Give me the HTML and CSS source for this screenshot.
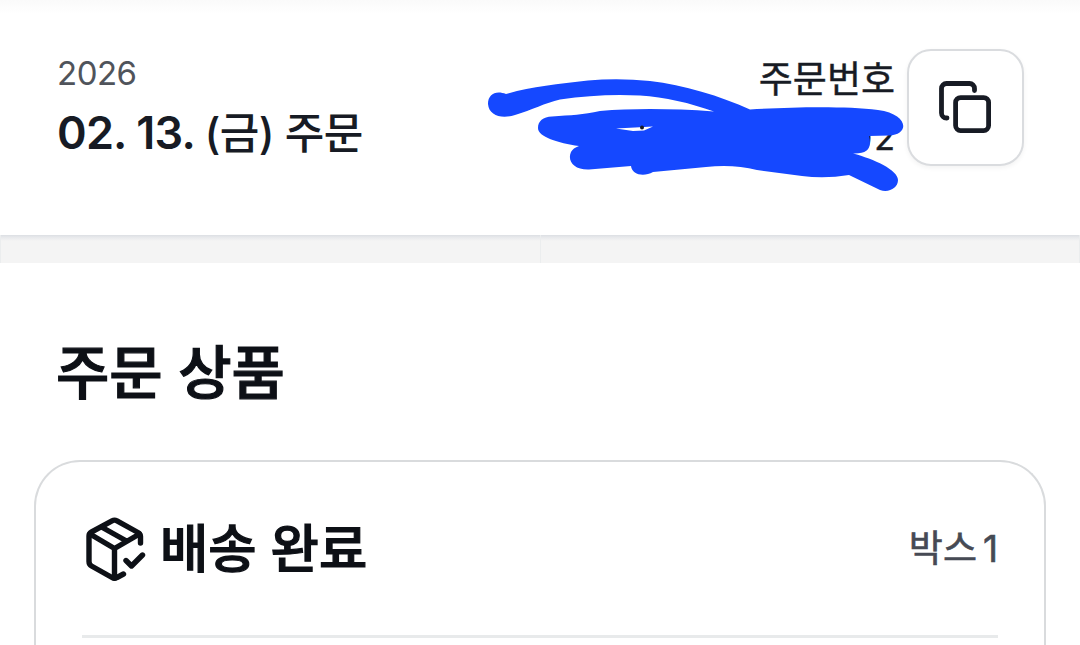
FILE: index.html
```html
<!DOCTYPE html>
<html lang="ko">
<head>
    <meta charset="UTF-8">
    <meta name="viewport" content="width=device-width, initial-scale=1.0">
    <title>주문 상세</title>
    <link rel="stylesheet" href="styles.css">
</head>
<body>
    <header class="order-header">
        <div class="order-date">
            <p class="year">2026</p>
            <h1 class="date">02. 13. <span>(금) 주문</span></h1>
        </div>
        <div class="order-number">
            <div class="number-text">
                <p class="label">주문번호</p>
                <p class="number">02</p>
            </div>
            <button class="copy" aria-label="복사">
                <svg viewBox="0 0 54 54" fill="none" stroke="#171b24" stroke-width="4.8" stroke-linecap="round">
                    <rect x="16.6" y="16.6" width="33" height="33" rx="5"/>
                    <path d="M35.500 9.500V7.500a5 5 0 0 0-5-5H7.500a5 5 0 0 0-5 5V32a5 5 0 0 0 5 5H8"/>
                </svg>
            </button>
        </div>
        <!-- marker over the order number -->
        <svg class="marker" viewBox="480 70 440 130">
            <path d="M488 103C488 93 496 89 506 93C530 86 558 83 588 79.500Q619 77 650 80C684 84 720 95 750 108.500C794 106 845 105 878 109C909 113 910 134 889 134.500L869 135C872 147 868 153 853 152.500C874 158 898 169 898 179C898 187 889 192 880 189L849 174Q825 178 802 175L757 169Q733 163 706 166L653 171C644 176 632 174 631 165L589 168.500C574 169 567 160 571 151Q573 147 579 145C558 142 538 136 538 127C538 120 543 116 552 115.500C571 114 583 114 600 110Q650 106 714 110.500C690 102 665 96 640 94.500Q600 92.500 560 98.500C545 102 532 109 515 114C502 118 489 115 488 103Z"/>
            <path class="gap" d="M616 127.500L635 126.500L653 125.500L644 129.500L633 130Z"/>
            <circle class="dot" cx="642" cy="126.500" r="2"/>
        </svg>
    </header>
    <div class="divider">
        <div></div>
        <div></div>
    </div>
    <main class="products">
        <h2>주문 상품</h2>
        <section class="box-card">
            <div class="box-head">
                <svg class="box-icon" viewBox="0 0 60 64" fill="none" stroke="#0d1016" stroke-width="5.4" stroke-linecap="round" stroke-linejoin="round">
                    <path d="M37.500 57L31 60.500Q28.500 62 26 60.500L5.500 49Q3 47.500 3 44.500V19Q3 16.300 5.500 15L26 3.800Q28.500 2.500 31 3.800L52 15.500Q54.500 17 54.500 19.500V26"/>
                    <path d="M4 17L28.500 31.500L53.500 17M28.500 31.500V61M15.500 10L40.500 24"/>
                    <path d="M40 43.500L45.500 49L56.500 38"/>
                </svg>
                <h3>배송 완료</h3>
                <p class="box-name">박스<span>1</span></p>
            </div>
            <hr>
        </section>
    </main>
</body>
</html>
```

FILE: styles.css
```css
*{
    padding: 0;
    margin: 0;
    box-sizing: border-box;
}
body{
    font-family: Inter, 'Noto Sans CJK KR', sans-serif;
    background: #fff;
    color: #171b24;
}
.order-header{
    position: relative;
    display: flex;
    justify-content: space-between;
    height: 235px;
    padding: 49px 56px 0 57px;
    background: linear-gradient(#fafafa, #fff 14px);
}
.year{
    margin-top: 4px;
    font-size: 33px;
    line-height: 40px;
    letter-spacing: -0.5px;
    color: #50545b;
}
.date{
    margin-top: 10px;
    font-size: 45px;
    line-height: 60px;
    font-weight: 600;
    letter-spacing: -0.8px;
    white-space: nowrap;
}
.date span{
    font-size: 43px;
    font-weight: 500;
    letter-spacing: -0.6px;
}
.order-number{
    display: flex;
    align-items: flex-start;
    gap: 12px;
}
.number-text{
    text-align: right;
}
.label{
    margin-top: 7px;
    font-size: 37px;
    line-height: 48px;
    -webkit-text-stroke: 0.4px #171b24;
}
.number{
    margin-top: 7px;
    margin-right: -2px;
    font-size: 34px;
    line-height: 54px;
    letter-spacing: 2px;
    -webkit-text-stroke: 0.4px #171b24;
}
.copy{
    display: flex;
    align-items: center;
    justify-content: center;
    width: 117px;
    height: 117px;
    background: #fff;
    border: 2px solid #dadcdf;
    border-radius: 24px;
    box-shadow: 0 2px 5px rgba(0, 0, 0, 0.05);
}
.copy svg{
    width: 54px;
    height: 54px;
}
.marker{
    position: absolute;
    left: 480px;
    top: 71px;
    width: 440px;
    height: 130px;
    fill: #1548ff;
}
.marker .gap{
    fill: #fff;
}
.marker .dot{
    fill: #171b24;
}
.divider{
    display: flex;
    height: 28px;
    background: #f4f4f4;
}
.divider div{
    flex: 1;
    border-left: 1px solid #ebedee;
    background: linear-gradient(#dcdfe3, #e6e8eb 2px, #f4f4f4 6px);
}
.divider div:last-child{
    border-right: 1px solid #ebedee;
}
.products{
    padding: 74px 34px 0;
}
.products h2{
    padding-left: 22px;
    font-size: 58px;
    line-height: 72px;
    font-weight: 500;
    -webkit-text-stroke: 1.2px #0d1016;
    color: #0d1016;
}
.box-card{
    height: 185px;
    margin-top: 51px;
    padding: 47px 46px 0;
    border: 2px solid #d9dbdd;
    border-bottom: 0;
    border-radius: 46px 46px 0 0;
}
.box-head{
    display: flex;
    align-items: center;
    height: 80px;
}
.box-icon{
    width: 60px;
    height: 64px;
    margin-left: 4px;
}
.box-head h3{
    margin: 0 0 1px 14px;
    font-size: 52.5px;
    line-height: 80px;
    font-weight: 500;
    -webkit-text-stroke: 1.2px #0d1016;
    color: #0d1016;
}
.box-name{
    margin: 0 0 7px auto;
    font-size: 37px;
    color: #464a54;
    -webkit-text-stroke: 0.6px #464a54;
}
.box-name span{
    margin-left: 6px;
}
hr{
    margin-top: 46px;
    border: 0;
    border-top: 3px solid #e8eaeb;
}
```
